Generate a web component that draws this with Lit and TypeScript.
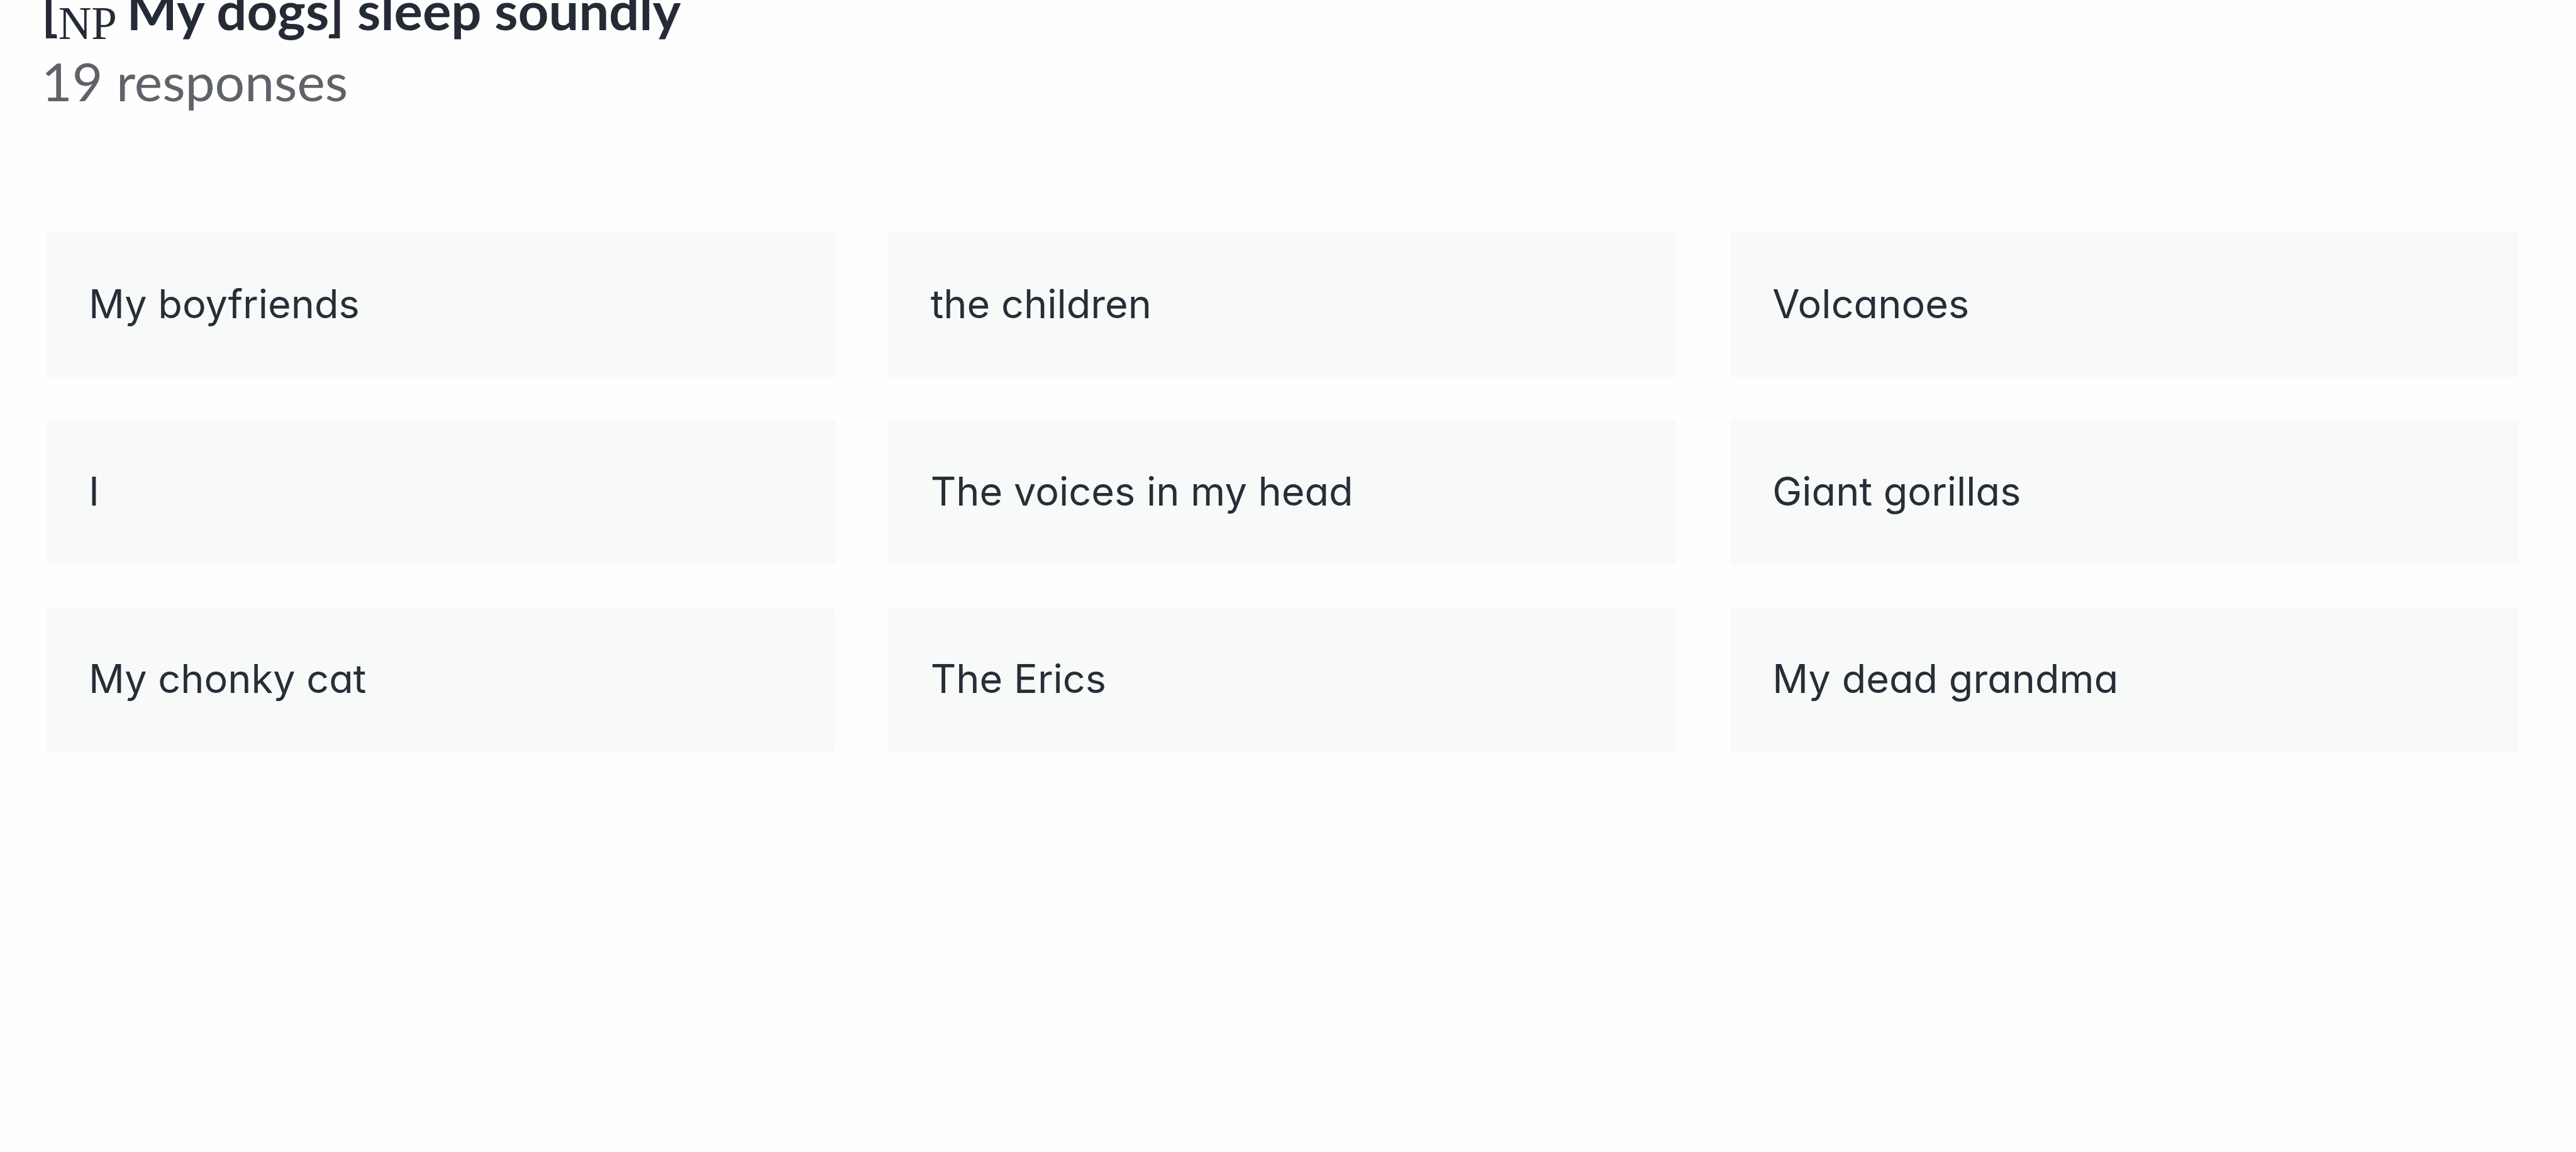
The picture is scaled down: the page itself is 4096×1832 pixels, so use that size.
import { LitElement, html, css } from "lit";
import { customElement, property } from "lit/decorators.js";

@customElement("response-card")
class ResponseCard extends LitElement {
  @property() text = "";

  static styles = css`
    :host {
      display: block;
      box-sizing: border-box;
      padding: 75px 67px 79px;
      border-radius: 4px;
      background: #f8f9f9;
      color: #282d37;
      font: 400 63px/76px Inter, "Liberation Sans", sans-serif;
      font-feature-settings: "cv11";
    }
    .text {
      margin: 0;
      overflow-wrap: anywhere;
    }
  `;

  render() {
    return html`<p class="text">${this.text}</p>`;
  }
}

@customElement("app-root")
class AppRoot extends LitElement {
  @property({ attribute: false }) responses = [
    "My boyfriends",
    "the children",
    "Volcanoes",
    "I",
    "The voices in my head",
    "Giant gorillas",
    "My chonky cat",
    "The Erics",
    "My dead grandma",
  ];

  static styles = css`
    :host {
      display: block;
      min-height: 100vh;
      overflow: hidden;
      background: #fefefe;
    }
    .header {
      margin-top: -42px;
      padding: 0 66px;
      font: 400 84px/114px Lato, "Liberation Sans", sans-serif;
    }
    .title {
      margin: 0;
      font: inherit;
      font-size: 85px;
      font-weight: 700;
      color: #252b36;
    }
    .label {
      font: 400 73px/1 "Liberation Serif", serif;
      line-height: 0;
      vertical-align: -14px;
      white-space: pre;
    }
    .count {
      margin: 0;
      color: #5f6369;
    }
    .grid {
      display: grid;
      grid-template-columns: repeat(3, minmax(0, 1fr));
      gap: 68px 85px;
      margin: 0;
      padding: 184px 91px 90px 74px;
      list-style: none;
    }
  `;

  render() {
    return html`
      <header class="header">
        <h1 class="title">[<sub class="label">NP </sub>My dogs] sleep soundly</h1>
        <p class="count">19 responses</p>
      </header>
      <ul class="grid">
        ${this.responses.map(
          (text) => html`<li><response-card .text=${text}></response-card></li>`
        )}
      </ul>
    `;
  }
}
